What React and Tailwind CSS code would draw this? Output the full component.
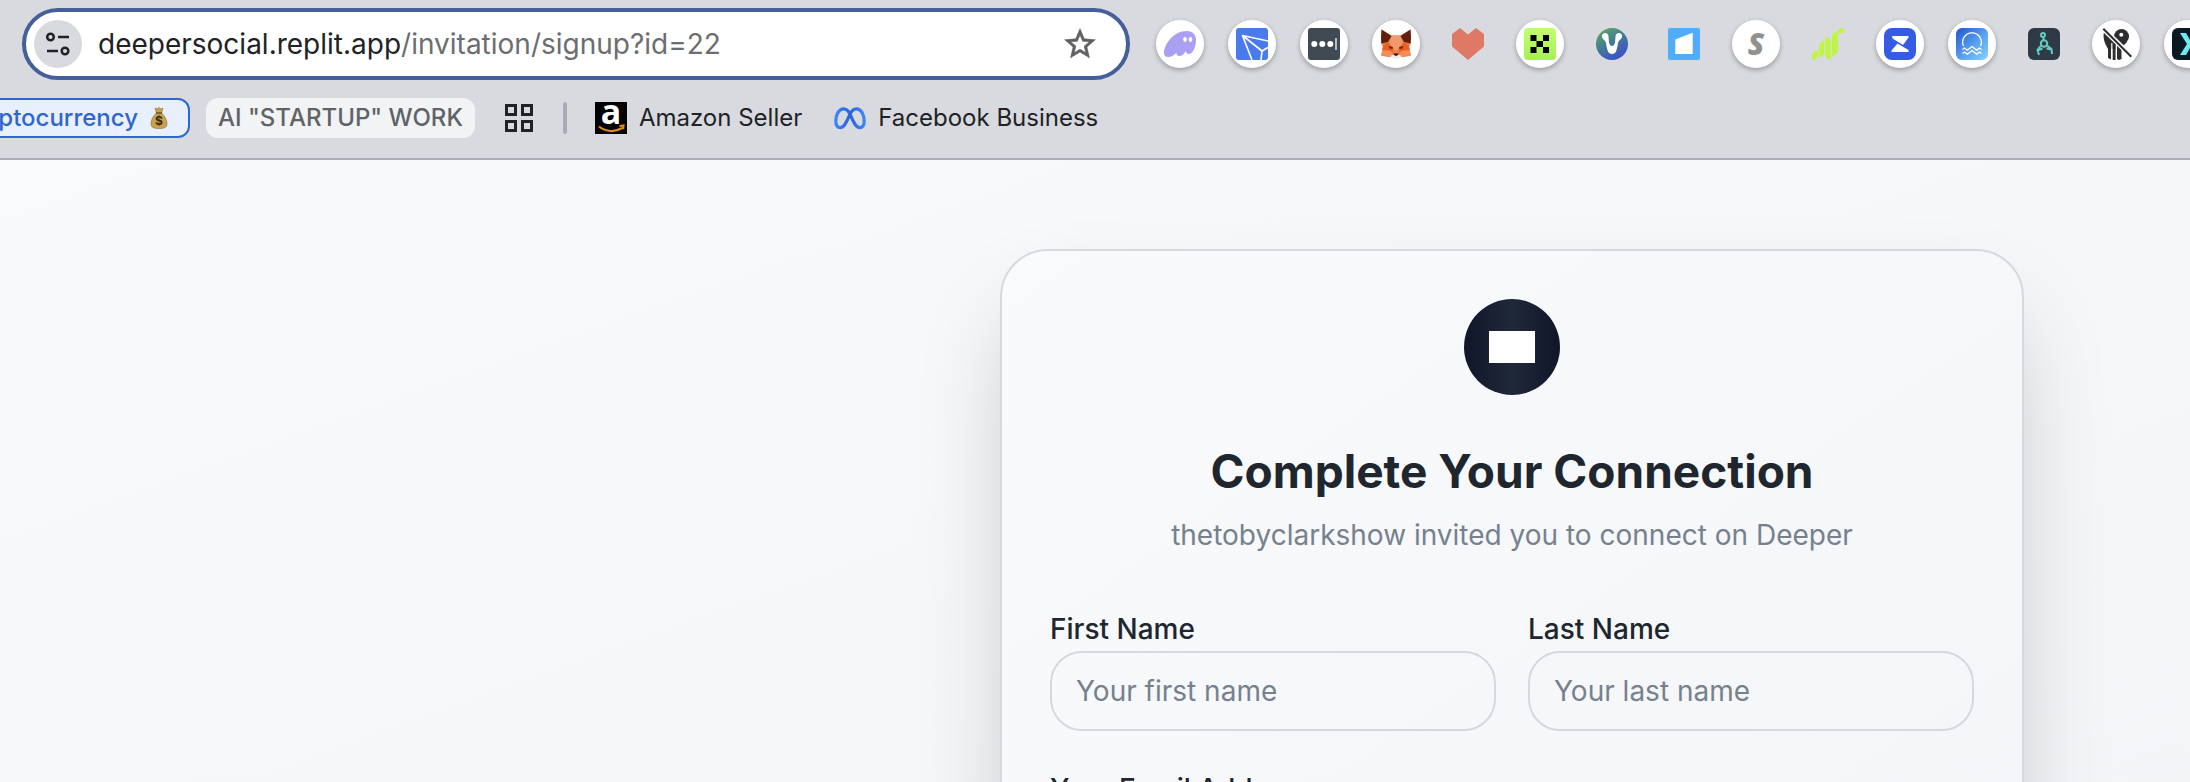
const Svg = ({ children, label }) => (
  <svg viewBox="0 0 32 32" className="size-8" role="img" aria-label={label}>
    {children}
  </svg>
);

const extensions = [
  {
    name: "Phantom",
    round: true,
    art: (
      <>
        <path fill="#ab9ff2" d="M0 25C0 17 9 3 23 3c6 0 9 4 9 9 0 8-4 14-7 14-2 0-3-1-3-3-2 3-4 5-6.500 5-2.500 0-3.500-1.500-3-3.500C10 27.500 7 29 4 29c-2.500 0-4-1.500-4-4z" />
        <ellipse cx="21" cy="11.500" rx="1.800" ry="2.400" fill="#fff" />
        <ellipse cx="26.500" cy="11.500" rx="1.800" ry="2.400" fill="#fff" />
      </>
    ),
  },
  {
    name: "TronLink",
    round: true,
    art: (
      <>
        <rect width="32" height="32" rx="3" fill="#4a7bed" />
        <path fill="none" stroke="#fff" strokeWidth="1.600" strokeLinejoin="round" d="M32 13 6.500 7.500 16 32M6.500 7.500 26 23l6-3.500M26 23l-1 9" />
      </>
    ),
  },
  {
    name: "Password field",
    round: true,
    art: (
      <>
        <rect width="32" height="32" rx="3" fill="#3f4a52" />
        <g fill="#fff">
          <circle cx="6.300" cy="16" r="3" />
          <circle cx="14.300" cy="16" r="3" />
          <circle cx="22.300" cy="16" r="3" />
        </g>
        <path fill="#b9bec2" d="M27 10h2v12h-2z" />
      </>
    ),
  },
  {
    name: "MetaMask",
    round: true,
    art: (
      <>
        <path fill="#ee7c42" d="M1.500 1.500 11.500 7.500h9l10-6L31 15l-2 4 2 8.500-7 1.500H8l-7-1.500L3 19l-2-4z" />
        <path fill="#f2996c" d="M11.500 7.500h9L23 15l-4 5-3 3-3-3-4-5z" />
        <path fill="#5f1f0e" d="M1.500 1.500 11.500 8 8 14l-6.500 1.500L1 10zM30.500 1.500 20.500 8l3.500 6 6.500 1.500L31 10z" />
        <path fill="#e85f28" d="m8 14 5 7-1 5-4-3-6-1 1-4zM24 14l-5 7 1 5 4-3 6-1-1-4z" />
        <path fill="#f28e55" d="m1 27 2-5 8 1 2 4-4 1.500zM31 27l-2-5-8 1-2 4 4 1.500z" />
        <path fill="#6a2a16" d="m8.500 18 4.500 1-.5 2-3-.5zM23.500 18 19 19l.5 2 3-.5z" />
        <path fill="#eceaea" d="m10 28 4-1.500h4l4 1.500-3.500 2.500h-5z" />
        <path fill="#2b1a18" d="M13.500 25.500h5l-.5 1.500-2 1-2-1z" />
      </>
    ),
  },
  {
    name: "Heart",
    art: <path fill="#de7966" d="M0 6 8 0l8 6.500L24 0l8 6v12.500L16 32 0 18.500z" />,
  },
  {
    name: "Pixel cross",
    round: true,
    art: (
      <>
        <defs>
          <linearGradient id="lime" x2="0" y2="1">
            <stop stopColor="#c1ff70" />
            <stop offset="1" stopColor="#a6f052" />
          </linearGradient>
        </defs>
        <rect width="32" height="32" rx="4" fill="url(#lime)" />
        <path fill="#000" d="M6.500 7h6v6h-6zM19 7h6v6h-6zM12.500 13H19v6h-6.500zM6.500 19h6v6h-6zM19 19h6v6h-6z" />
      </>
    ),
  },
  {
    name: "V wallet",
    art: (
      <>
        <defs>
          <linearGradient id="vee" x1=".2" y1="0" x2=".75" y2="1">
            <stop stopColor="#5aa564" />
            <stop offset=".5" stopColor="#42789a" />
            <stop offset="1" stopColor="#3a4bd2" />
          </linearGradient>
        </defs>
        <circle cx="16" cy="16" r="16" fill="url(#vee)" />
        <path fill="#fff" d="M6 9a3.300 3.300 0 1 1 6.500-.5c.2 3 .2 5 1 7.500.8 2.500 4.200 2.500 5 0 .8-2.500.8-4.500 1-7.500A3.300 3.300 0 1 1 26 9c-.5 2.500-3.500 3-4 6-.6 3.500-1 5.500-1.800 8-1 4-7.400 4-8.400 0-.8-2.500-1.200-4.500-1.800-8-.5-3-3.500-3.500-4-6z" />
      </>
    ),
  },
  {
    name: "Blue page",
    art: (
      <>
        <rect width="32" height="32" rx="2" fill="#4fadfa" />
        <path fill="#fff" d="m7.300 11.500 17.400-6.800V26H7.300z" />
      </>
    ),
  },
  {
    name: "S extension",
    round: true,
    letter: true,
  },
  {
    name: "Green bars",
    art: (
      <>
        <path fill="#bdf53f" d="M0 29c0-3.500 2.500-6.500 6-6.500V26c0 3.500-2.500 6-6 6zM7.200 19c0-3 2-5.500 5-6v11c0 3-2 5-5 5.500zM13.400 9c2.500 0 5.400 2 5.400 5v18c-3.200-.5-5.400-2.500-5.400-5zM20 9c0-3 2.500-5 5.800-5.500V22c0 3-2.500 5.500-5.800 6.500z" />
        <path fill="none" stroke="#bdf53f" strokeWidth="1.200" d="m24 4.500 4-1.500" />
        <circle cx="29.300" cy="2.700" r="2.700" fill="#bdf53f" />
      </>
    ),
  },
  {
    name: "Z wallet",
    round: true,
    art: (
      <>
        <rect width="32" height="32" rx="8" fill="#345ae6" />
        <path fill="#fff" d="M8 8h16.500v1.500L19 17 8.500 10.500zM24.500 24H7.500v-1.500l6-7L24.500 22z" />
      </>
    ),
  },
  {
    name: "Ocean",
    round: true,
    art: (
      <>
        <defs>
          <linearGradient id="sea" x2="1" y2="1">
            <stop stopColor="#1f55cf" />
            <stop offset=".55" stopColor="#5aa2f0" />
            <stop offset="1" stopColor="#86d2ff" />
          </linearGradient>
        </defs>
        <rect width="32" height="32" rx="6" fill="url(#sea)" />
        <path fill="none" stroke="#fff" strokeWidth="1.300" strokeLinejoin="round" d="M7.500 18a9.300 9.300 0 1 1 17 0M6.500 21.500l2-1.500 2.800 2.200L16 18.500l4.700 3.700 2.800-2.200 2 1.500M6.500 25.500l2-1.500 2.800 2.200L16 22.500l4.700 3.700 2.800-2.200 2 1.500" />
      </>
    ),
  },
  {
    name: "Claw",
    art: (
      <>
        <rect width="32" height="32" rx="6" fill="#2f3a47" />
        <g fill="none" stroke="#62cbc2" strokeWidth="2">
          <circle cx="15" cy="7" r="2" />
          <circle cx="16" cy="15.500" r="3.200" />
          <path d="M15.500 9v4M13 17.500 9.500 22l1.500 5M9.500 22.500l5-2M19 17.500l4.500 3.500.5 5M23.500 21.500l-5-1" />
        </g>
      </>
    ),
  },
  {
    name: "Bird off",
    round: true,
    art: (
      <>
        <g fill="#2d2d2f">
          <path d="M4 4c4 1 7 4 10 7l7 8-4 2H8C5 16 2.500 10 4 4z" />
          <path d="M8 18h3.200v13.500L8 30zM12.500 18h3.200v14h-3.200zM17 18h4.500v13l-2.500 1-2-1z" />
          <circle cx="21.500" cy="8.500" r="7.500" />
          <path d="m14 8 13 6-6 6-6-6z" />
        </g>
        <path stroke="#fff" strokeWidth="1.200" d="M11.800 15v17M16.400 17v15" />
        <circle cx="21.300" cy="6.800" r="2" fill="#fff" />
        <path stroke="#fff" strokeWidth="5" d="m3 .5 28.500 28" />
        <path stroke="#2d2d2f" strokeWidth="2" d="m3.300.7 28 28" />
      </>
    ),
  },
  {
    name: "X extension",
    round: true,
    art: (
      <>
        <rect width="32" height="32" rx="6" fill="#0b1a22" />
        <path fill="#6eeaf2" d="M8 5h6l4 7 4-7h5l-6 11 6 11h-5l-4-7-4 7H8l7-11z" />
      </>
    ),
  },
];

function MoneyBag() {
  return (
    <svg viewBox="0 0 18 22" className="h-[22px] w-[18px] overflow-visible" role="img" aria-label="money bag">
      <path fill="#c9a24d" stroke="#8b6a2b" strokeWidth=".6" d="m5 1 2 1 2-1.500L11 2l2-1-1.500 5C15 9 17 13 17 17c0 3-2 4.500-8 4.500S1 20 1 17c0-4 2-8 5.500-11z" />
      <path stroke="#6b4c1b" strokeWidth="1.400" d="M6 6h6" />
      <text x="9" y="18" textAnchor="middle" className="fill-[#3a2b12] font-['Inter',sans-serif] text-[12px] font-bold">$</text>
    </svg>
  );
}

function Field({ id, label, placeholder, type = "text" }) {
  return (
    <div className="flex flex-col gap-2">
      <label htmlFor={id} className="text-[28px] leading-7 font-medium text-[#20262e]">
        {label}
      </label>
      <input
        id={id}
        type={type}
        placeholder={placeholder}
        className="h-20 w-full rounded-[32px] border-2 border-[#d5d9df] bg-transparent px-6 text-[28px] text-[#20262e] placeholder:text-[#77818e]"
      />
    </div>
  );
}

export default function App() {
  return (
    <div className="flex h-screen flex-col overflow-hidden bg-[#f7f9fb] font-['Inter',sans-serif]">
      <header className="shrink-0 border-b-2 border-[#adadb5] bg-[#d9dadf] pt-2">
        <div className="flex items-center gap-[26px] pl-[22px]">
          <div className="flex h-[72px] w-[1108px] shrink-0 items-center rounded-full border-4 border-[#455f9b] bg-white pr-[30px] pl-2">
            <button aria-label="Site information" className="flex size-12 shrink-0 items-center justify-center rounded-full bg-[#d9dadf]">
              <svg viewBox="0 0 24 24" className="size-6" fill="none" stroke="#202226" strokeWidth="2.500">
                <circle cx="4.500" cy="5" r="3.300" />
                <path d="M12 5h11M1 19h11" />
                <circle cx="19" cy="19" r="3.300" />
              </svg>
            </button>
            <p className="ml-4 grow text-[28px] leading-10 whitespace-nowrap text-[#6c6d70]">
              <span className="text-[#202226]">deepersocial.replit.app</span>/invitation/signup?id=22
            </p>
            <button aria-label="Bookmark this tab">
              <svg viewBox="1.500 1.500 21 21" className="size-8" fill="#5f6062" stroke="#5f6062" strokeWidth=".4">
                <path d="m22 9.240-7.190-.62L12 2 9.190 8.630 2 9.240l5.460 4.730L5.820 21 12 17.270 18.180 21l-1.630-7.030L22 9.240zM12 15.400l-3.760 2.270 1-4.280-3.320-2.880 4.380-.38L12 6.100l1.710 4.040 4.380.38-3.320 2.880 1 4.280L12 15.400z" />
              </svg>
            </button>
          </div>
          <div className="flex shrink-0 gap-6">
            {extensions.map((e) => (
              <button
                key={e.name}
                aria-label={e.name}
                className={
                  e.round
                    ? "flex size-12 items-center justify-center rounded-full bg-white shadow-[0_2px_5px_rgba(0,0,0,0.3)]"
                    : "flex size-12 items-center justify-center"
                }
              >
                {e.letter ? (
                  <span className="font-['Open_Sans',sans-serif] text-[30px] leading-8 font-extrabold text-[#919191] italic">S</span>
                ) : (
                  <Svg label={e.name}>{e.art}</Svg>
                )}
              </button>
            ))}
          </div>
        </div>
        <nav className="flex h-[78px] items-center pb-0.5 text-[24px] leading-8 whitespace-nowrap text-[#202226]">
          <div className="flex w-[190px] justify-end">
            <button className="flex h-10 shrink-0 items-center gap-3 rounded-xl border-2 border-[#2f66d0] bg-[#e8f0fe] pr-5 pl-3 font-medium text-[#2f66d0]">
              Cryptocurrency <MoneyBag />
            </button>
          </div>
          <button className="ml-4 h-10 rounded-xl bg-[#f1f3f4] px-3 font-medium text-[#5f6368]">AI "STARTUP" WORK</button>
          <button aria-label="Apps" className="ml-[30px]">
            <svg viewBox="0 0 28 28" className="size-7" fill="none" stroke="#202226" strokeWidth="3">
              <path d="M1.500 1.500h9v9h-9zM17.500 1.500h9v9h-9zM1.500 17.500h9v9h-9zM17.500 17.500h9v9h-9z" />
            </svg>
          </button>
          <span className="ml-[30px] h-8 w-1 rounded-full bg-[#a9abb8]" />
          <a href="#amazon" className="ml-7 flex items-center gap-3">
            <svg viewBox="0 0 32 32" className="size-8 overflow-visible" aria-hidden="true">
              <rect width="32" height="32" fill="#000" />
              <text x="16" y="22" textAnchor="middle" className="fill-white font-['Open_Sans',sans-serif] text-[34px] font-bold">a</text>
              <path fill="none" stroke="#e08a1e" strokeWidth="2.200" d="M4 24.500c7 5.500 16 6 23 1.500M24.500 24l4-.5-.5 3.500" />
            </svg>
            Amazon Seller
          </a>
          <a href="#facebook" className="ml-8 flex items-center gap-3">
            <svg viewBox="0 0 32 22" className="h-[22px] w-8 overflow-visible" aria-hidden="true">
              <defs>
                <linearGradient id="meta" x2="1">
                  <stop stopColor="#3b86f7" />
                  <stop offset=".5" stopColor="#2a62dd" />
                  <stop offset="1" stopColor="#3b86f7" />
                </linearGradient>
              </defs>
              <path fill="none" stroke="url(#meta)" strokeWidth="3.200" strokeLinejoin="round" d="M16 7c-1.500-3-4-5.200-6.500-5.200-4.700 0-7.700 6-7.700 12.200 0 4.500 1.700 6.700 4.500 6.700 3.500 0 5.700-4.200 9.700-13.700 1.500-3 4-5.200 6.500-5.200 4.700 0 7.700 6 7.700 12.200 0 4.500-1.700 6.700-4.500 6.700-3.500 0-5.700-4.200-9.700-13.700z" />
            </svg>
            Facebook Business
          </a>
        </nav>
      </header>

      <main className="flex grow justify-end bg-linear-to-br from-[#f8fafc] to-[#f3f4f7] pt-[89px] pr-[166px]">
        <section className="h-fit w-[1024px] rounded-[48px] border-2 border-[#d5d9df] bg-linear-to-br from-[#f8fafc] to-[#f3f5f8] p-12 shadow-[0_50px_100px_-24px_rgba(0,0,0,0.25)]">
          <div className="flex flex-col items-center text-center">
            <div className="flex size-24 items-center justify-center rounded-full bg-linear-to-r from-[#111629] via-[#202939] to-[#111629]">
              <div className="h-8 w-[46px] bg-white" />
            </div>
            <h1 className="mt-12 text-[46px] leading-[56px] font-bold text-[#20262e]">Complete Your Connection</h1>
            <p className="mt-4 text-[28px] leading-10 text-[#77818e]">thetobyclarkshow invited you to connect on Deeper</p>
          </div>
          <form className="mt-15 flex flex-col gap-11">
            <div className="grid grid-cols-2 gap-8">
              <Field id="first" label="First Name" placeholder="Your first name" />
              <Field id="last" label="Last Name" placeholder="Your last name" />
            </div>
            <Field id="email" label="Your Email Address" type="email" placeholder="" />
          </form>
        </section>
      </main>
    </div>
  );
}
